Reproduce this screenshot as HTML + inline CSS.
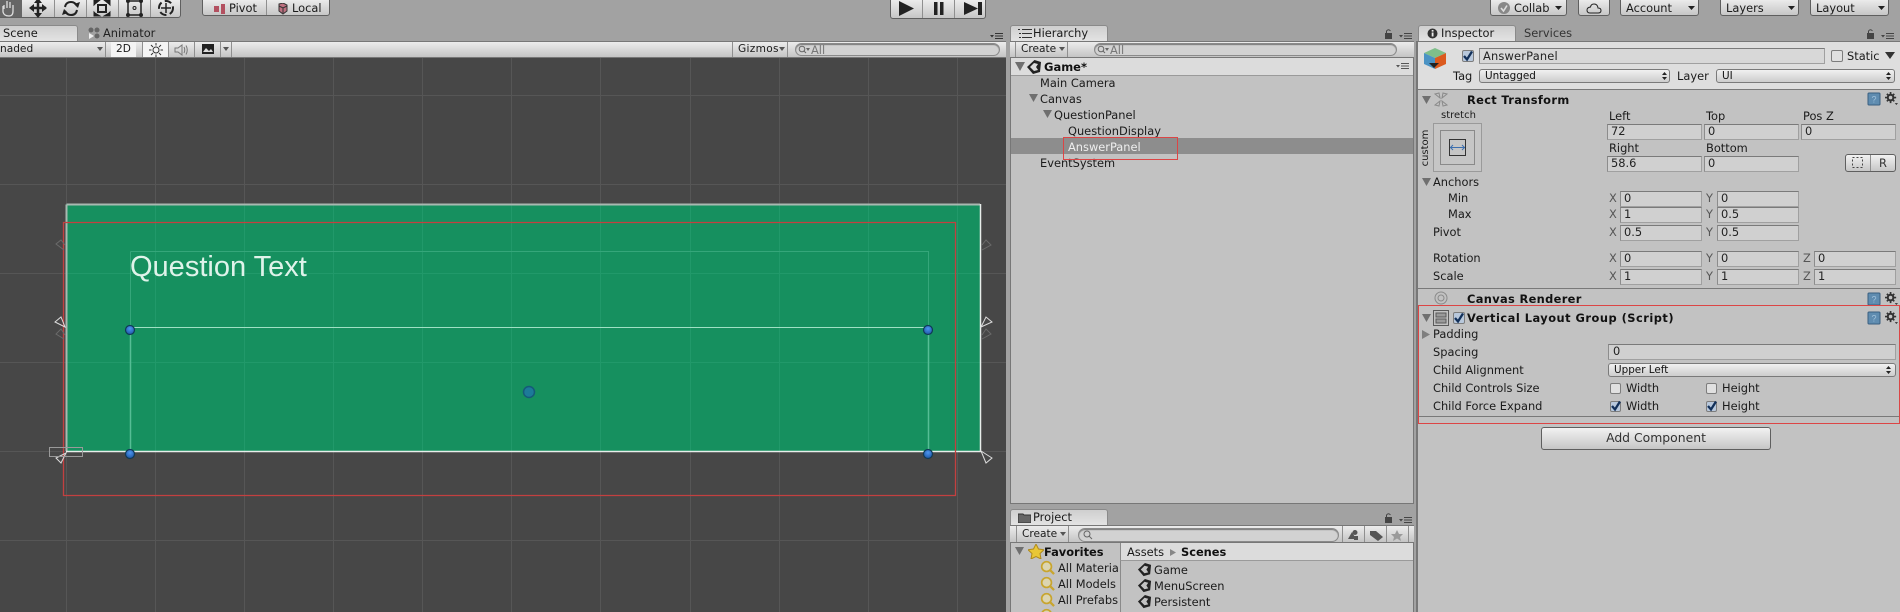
<!DOCTYPE html>
<html><head><meta charset="utf-8"><title>Unity Editor</title>
<style>
html,body{margin:0;padding:0;background:#a2a2a2}
#r{position:relative;width:1900px;height:612px;overflow:hidden;background:#a2a2a2;font:11.4px/16px "DejaVu Sans","Liberation Sans",sans-serif;color:#1a1a1a}
#r div,#r svg{position:absolute}
.t{white-space:nowrap;height:16px}
.b{font-weight:bold;color:#111}
.tab{background:linear-gradient(#cfcfcf,#e4e4e4);border:1px solid #8a8a8a;border-bottom:0;border-radius:3px 3px 0 0;box-sizing:border-box}
.tb{background:linear-gradient(#ececec,#c4c4c4);border-top:1px solid #777;border-bottom:1px solid #777;box-sizing:border-box}
.btn{background:linear-gradient(#f2f2f2,#c6c6c6);border:1px solid #5f5f5f;border-radius:3px;box-sizing:border-box}
.sep{background:#8f8f8f;width:1px}
.f{background:#d0d0d0;border:1px solid #a0a0a0;border-top-color:#7a7a7a;border-left-color:#8c8c8c;box-sizing:border-box;line-height:13px;padding-left:3px;font-size:11.4px;color:#222}
.dd{background:linear-gradient(#f0f0f0,#cdcdcd);border:1px solid #7a7a7a;border-radius:3px;box-sizing:border-box;font-size:10.4px;line-height:12px;padding-left:5px;color:#111}
.search{background:#d2d2d2;border:1px solid #8a8a8a;border-radius:8px;box-sizing:border-box;box-shadow:inset 0 1px 1px #777;color:#777;line-height:12px}
.red{border:1px solid #dc4545;box-sizing:border-box}
.cb{width:11px;height:11px;background:#e0e0e0;border:1px solid #7d7d7d;border-radius:2px;box-sizing:border-box}
.l{background:#797979;height:1px}
</style></head><body><div id="r">
<svg width="0" height="0" style="display:none"><defs>
<symbol id="u" viewBox="0 0 16 16"><path d="M8.500 1 15 3 14 13 7 15 1 8ZM4 8 8 4 12 5 10 8 12 11 8 12Z" fill="#222" fill-rule="evenodd"/></symbol>
<symbol id="q" viewBox="0 0 16 16"><circle cx="7" cy="7" r="5.200" fill="#f6e8a0" fill-opacity=".5" stroke="#c8a52e" stroke-width="1.800"/><path d="M11 11 15 15" stroke="#c8a52e" stroke-width="2.400"/></symbol>
<symbol id="h" viewBox="0 0 14 14"><rect x="1" y="1" width="12" height="12" rx="1" fill="#5f8cb0" stroke="#3a5f80"/><text x="7" y="10.500" font-size="9" text-anchor="middle" fill="#9fc0da" font-family="Liberation Sans">?</text></symbol>
<symbol id="g" viewBox="0 0 14 14"><circle cx="6" cy="6" r="3" fill="none" stroke="#333" stroke-width="2.200"/><path d="M6 0V3M6 9V12M0 6H3M9 6H12M2 2 4 4M10 2 8 4M2 10 4 8M10 10 8 8" stroke="#333" stroke-width="1.800"/><path d="M10.500 12H14L12.250 14Z" fill="#333"/></symbol>
<symbol id="c" viewBox="0 0 12 12"><path d="M2 6 5 9.500 10 1.500" fill="none" stroke="#12305a" stroke-width="2.300"/></symbol>
</defs></svg>

<!-- Scene panel -->
<div style="left:0;top:58px;width:1006px;height:554px;background:#474747"></div>
<svg style="left:0;top:58px" width="1006" height="554"><g stroke="#565656" stroke-width="1" shape-rendering="crispEdges"><path d="M66.500 0V554M155.500 0V554M244.500 0V554M333.500 0V554M422.500 0V554M511.500 0V554M600.500 0V554M690.500 0V554M779.500 0V554M868.500 0V554M957.500 0V554M0 37.500H1006M0 126.500H1006M0 215.500H1006M0 304.500H1006M0 393.500H1006M0 482.500H1006"/></g></svg>
<div style="left:66px;top:204px;width:914px;height:247px;background:#16905f"></div>
<svg style="left:0;top:58px" width="1006" height="554"><g stroke="#2ea377" stroke-opacity=".45" stroke-width="1" shape-rendering="crispEdges"><path d="M155.500 146V393M244.500 146V393M333.500 146V393M422.500 146V393M511.500 146V393M600.500 146V393M690.500 146V393M779.500 146V393M868.500 146V393M957.500 146V393M66 215.500H980M66 304.500H980"/></g></svg>
<svg style="left:0;top:190px" width="1006" height="330" fill="none">
<path d="M66.500 14.500V261M66.500 14.500H980" stroke="#a9b8b1" stroke-width="2"/>
<path d="M66 261.500H980.500V14" stroke="#e8eeeb" stroke-width="1.500"/>
<path d="M130.500 61.500H928.500V261M130.500 61.500V261" stroke="#35a67a" stroke-width="1"/>
<path d="M130.500 137.500H928.500" stroke="#9fe0c4" stroke-width="1"/>
<path d="M130.500 137V261M928.500 137V261" stroke="#56bd95" stroke-width="1.500"/>
<path d="M63.500 32.500H955.500V305.500H63.500Z" stroke="#c34040" stroke-width="1.300"/>
<path d="M64 60 56 54 61 50 65 55M64 149 56 144 61 139 65 145M982 60 991 55 986 50 982 55M982 149 991 144 986 139 982 145" stroke="#6a6a6a"/>
<path d="M65 137 55 132 61 127ZM66 263 56 268 61 273ZM981 137 992 132 986 127ZM981 261 992 268 986 273Z" stroke="#dcdcdc"/>
<rect x="49.500" y="257.500" width="33" height="9" stroke="#9a9a9a"/>
</svg>
<svg style="left:0;top:0" width="1006" height="612">
<defs><radialGradient id="bl" cx=".5" cy=".35" r=".7"><stop offset="0" stop-color="#4d96ef"/><stop offset="1" stop-color="#1a52a0"/></radialGradient></defs>
<g fill="url(#bl)" stroke="#103a57" stroke-width="1.200"><circle cx="130" cy="330" r="4.500"/><circle cx="928" cy="330" r="4.500"/><circle cx="130" cy="454" r="4.500"/><circle cx="928" cy="454" r="4.500"/></g>
<circle cx="529" cy="392" r="5.500" fill="#1d7a99" stroke="#155a78" stroke-width="1.500"/>
</svg>
<div class="t" style="left:130px;top:251px;height:32px;font:29px/32px 'Liberation Sans',sans-serif;color:#dff3ea">Question Text</div>

<!-- Top tools -->
<div class="btn" style="left:-6px;top:-4px;width:187px;height:22px"></div>
<div style="left:0;top:0;width:22px;height:17px;background:#666"></div>
<div class="sep" style="left:54px;top:0;height:17px"></div><div class="sep" style="left:86px;top:0;height:17px"></div><div class="sep" style="left:118px;top:0;height:17px"></div><div class="sep" style="left:150px;top:0;height:17px"></div>
<svg style="left:0;top:0" width="182" height="18" fill="none" stroke="#222" stroke-width="2">
<path d="M3 6V12Q4 16 9 16 13 16 13 11V5M4 5V9M7 1V8M10 2V8" stroke="#ddd" stroke-width="1.300"/>
<path d="M38 1V15M31 8H46" stroke-width="2.500"/><path d="M38 -2 34 3H42ZM38 18 34 13H42ZM29 8 34 4V12ZM47 8 42 4V12Z" fill="#222" stroke="none"/>
<path d="M65 7Q66 2 71 2 75 2 77 6M77 10Q76 15 71 15 67 15 65 11" stroke-width="2"/><path d="M78 8 74 4 80 2ZM64 9 68 13 62 15Z" fill="#222" stroke="none"/>
<rect x="98" y="5" width="8" height="7" stroke-width="2"/><path d="M95 4 100 0H94V5ZM109 4 104 0H110V5ZM95 13 100 16H94V12ZM109 13 104 16H110V12Z" fill="#222" stroke="#222" stroke-width="1"/>
<path d="M128 1H140M128 15H140M128 1V15M141 1V15" stroke-width="1.500"/><circle cx="134.500" cy="8" r="1.500" stroke-width="1"/><g fill="#222" stroke="none"><circle cx="128" cy="1" r="2"/><circle cx="141" cy="1" r="2"/><circle cx="128" cy="15" r="2"/><circle cx="141" cy="15" r="2"/></g>
<circle cx="166" cy="8" r="7" stroke-width="2" stroke-dasharray="7 3.500"/><path d="M166 3V13M161 8H171" stroke-width="1.500"/>
</svg>
<div class="btn" style="left:202px;top:-4px;width:128px;height:20px"></div><div class="sep" style="left:266px;top:0;height:15px"></div>
<svg style="left:213px;top:3px" width="110" height="12"><rect x="1" y="3" width="5" height="6" fill="#b35060"/><rect x="8" y="1" width="4" height="10" fill="#b35060"/><path d="M66 1 70 0 74 2V8L70 11 66 8Z" fill="#bd7080" stroke="#333"/><path d="M66 3 70 5 74 3M70 5V10" stroke="#333" fill="none"/></svg>
<div class="t" style="left:229px;top:0">Pivot</div><div class="t" style="left:292px;top:0">Local</div>
<div class="btn" style="left:890px;top:-4px;width:96px;height:23px"></div><div class="sep" style="left:922px;top:0;height:18px"></div><div class="sep" style="left:954px;top:0;height:18px"></div>
<svg style="left:890px;top:0" width="96" height="18" fill="#222"><path d="M9 1 24 8.500 9 16Z"/><rect x="44" y="2" width="3.500" height="13"/><rect x="50" y="2" width="3.500" height="13"/><path d="M74 2 88 8.500 74 15ZM88 2H92V15H88Z"/></svg>
<div class="btn" style="left:1490px;top:-4px;width:77px;height:20px"></div>
<svg style="left:1498px;top:2px" width="12" height="12"><circle cx="6" cy="6" r="6" fill="#888"/><path d="M3 6 5.500 9 9 3.500" fill="none" stroke="#ddd" stroke-width="1.600"/></svg>
<div class="t" style="left:1514px;top:0">Collab</div><svg style="left:1555px;top:6px" width="7" height="5"><path d="M0 0H7L3.500 4Z" fill="#222"/></svg>
<div class="btn" style="left:1578px;top:-4px;width:32px;height:20px"></div>
<svg style="left:1586px;top:2px" width="16" height="12"><path d="M4 11H12Q15 11 15 8.500 15 6 12 6 11.500 2 8 2 5 2 4.500 5 1 5.500 1 8 1 11 4 11Z" fill="none" stroke="#222"/></svg>
<div class="btn" style="left:1620px;top:-4px;width:79px;height:20px"></div><div class="t" style="left:1626px;top:0">Account</div><svg style="left:1688px;top:6px" width="7" height="5"><path d="M0 0H7L3.500 4Z" fill="#222"/></svg>
<div class="btn" style="left:1720px;top:-4px;width:79px;height:20px"></div><div class="t" style="left:1726px;top:0">Layers</div><svg style="left:1788px;top:6px" width="7" height="5"><path d="M0 0H7L3.500 4Z" fill="#222"/></svg>
<div class="btn" style="left:1810px;top:-4px;width:79px;height:20px"></div><div class="t" style="left:1816px;top:0">Layout</div><svg style="left:1878px;top:6px" width="7" height="5"><path d="M0 0H7L3.500 4Z" fill="#222"/></svg>

<!-- Scene tabs/toolbar -->
<div class="tab" style="left:-3px;top:25px;width:81px;height:17px"></div>
<div class="t" style="left:3px;top:25px">Scene</div>
<svg style="left:88px;top:27px" width="12" height="13" fill="#666"><circle cx="3" cy="3" r="2.500"/><circle cx="9" cy="3" r="2.500"/><circle cx="9" cy="9" r="2.500"/><path d="M1 6 6 9 1 12Z" fill="#eee"/></svg>
<div class="t" style="left:103px;top:25px;color:#222">Animator</div>
<div class="tb" style="left:0;top:41px;width:1006px;height:17px"></div>
<div class="t" style="left:0;top:41px;font-size:10.6px">naded</div>
<svg style="left:97px;top:47px" width="6" height="4"><path d="M0 0H6L3 4Z" fill="#555"/></svg>
<div class="sep" style="left:105px;top:42px;height:15px"></div>
<div style="left:111px;top:42px;width:25px;height:15px;background:#f4f4f4"></div><div class="t" style="left:116px;top:41px;font-size:10.6px">2D</div>
<div class="sep" style="left:142px;top:42px;height:15px"></div>
<div style="left:143px;top:42px;width:25px;height:15px;background:#f4f4f4"></div>
<svg style="left:149px;top:43px" width="14" height="14" fill="none" stroke="#333"><circle cx="7" cy="7" r="3"/><path d="M7 0V2.500M7 11.500V14M0 7H2.500M11.500 7H14M2 2 4 4M10 10 12 12M12 2 10 4M4 10 2 12"/></svg>
<div class="sep" style="left:168px;top:42px;height:15px"></div><div class="sep" style="left:194px;top:42px;height:15px"></div><div class="sep" style="left:220px;top:42px;height:15px"></div><div class="sep" style="left:231px;top:42px;height:15px"></div>
<svg style="left:174px;top:44px" width="15" height="12" fill="none" stroke="#777"><path d="M1 4H4L8 1V11L4 8H1Z"/><path d="M10 3Q11.500 6 10 9M12 1.500Q14.500 6 12 10.500"/></svg>
<svg style="left:202px;top:44px" width="12" height="11"><rect width="12" height="10" fill="#222"/><path d="M1 8 4 4 7 7 9 5 11 8Z" fill="#ddd"/></svg>
<svg style="left:223px;top:47px" width="6" height="4"><path d="M0 0H6L3 4Z" fill="#555"/></svg>
<div class="sep" style="left:732px;top:42px;height:15px"></div><div class="t" style="left:738px;top:41px;font-size:10.6px;letter-spacing:.3px">Gizmos</div>
<svg style="left:779px;top:47px" width="6" height="4"><path d="M0 0H6L3 4Z" fill="#555"/></svg>
<div class="sep" style="left:787px;top:42px;height:15px"></div>
<div class="search" style="left:795px;top:43px;width:205px;height:13px;padding-left:15px">All</div>
<svg style="left:798px;top:45px" width="12" height="9" fill="none" stroke="#666"><circle cx="4" cy="4" r="2.800"/><path d="M6 6 8 8"/><path d="M8 3H12L10 6Z" fill="#666" stroke="none"/></svg>
<svg style="left:990px;top:33px" width="14" height="6" fill="#333"><path d="M0 2H4L2 4.500Z"/><rect x="5" y="0" width="8" height="1"/><rect x="5" y="2.500" width="8" height="1"/><rect x="5" y="5" width="8" height="1"/></svg>

<!-- Hierarchy -->
<div style="left:1010px;top:41px;width:404px;height:463px;background:#c2c2c2;border:1px solid #777;border-top:0;box-sizing:border-box"></div>
<div class="tab" style="left:1010px;top:25px;width:98px;height:17px"></div>
<svg style="left:1018px;top:29px" width="14" height="9" fill="#333"><path d="M0 0H2V1H0ZM4 0H14V1H4ZM1 4H3V5H1ZM4 4H14V5H4ZM1 8H3V9H1ZM4 8H14V9H4Z"/></svg>
<div class="t" style="left:1033px;top:25px">Hierarchy</div>
<svg style="left:1384px;top:29px" width="29" height="11" fill="#444"><rect x="1" y="4" width="7" height="6"/><path d="M2.500 4V2Q4.500 -0.500 6.500 2" fill="none" stroke="#444"/><path d="M15 6H19L17 8.500Z"/><path d="M20 4H28V5H20ZM20 6.500H28V7.500H20ZM20 9H28V10H20Z"/></svg>
<div class="tb" style="left:1010px;top:41px;width:404px;height:17px"></div>
<div class="sep" style="left:1015px;top:42px;height:15px"></div><div class="sep" style="left:1067px;top:42px;height:15px"></div>
<div class="t" style="left:1021px;top:41px;font-size:10.6px">Create</div>
<svg style="left:1059px;top:47px" width="6" height="4"><path d="M0 0H6L3 4Z" fill="#555"/></svg>
<div class="search" style="left:1094px;top:43px;width:303px;height:13px;padding-left:15px">All</div>
<svg style="left:1097px;top:45px" width="12" height="9" fill="none" stroke="#666"><circle cx="4" cy="4" r="2.800"/><path d="M6 6 8 8"/><path d="M8 3H12L10 6Z" fill="#666" stroke="none"/></svg>
<div style="left:1011px;top:58px;width:402px;height:17px;background:#dcdcdc;border-bottom:1px solid #9a9a9a;box-sizing:content-box"></div>
<svg style="left:1015px;top:62px" width="11" height="10"><path d="M0 0H10L5 9Z" fill="#6f6f6f"/></svg>
<svg style="left:1026px;top:59px;width:16px;height:16px"><use href="#u"/></svg>
<div class="t b" style="left:1044px;top:59px;font-size:11.5px">Game*</div>
<svg style="left:1396px;top:63px" width="14" height="6" fill="#555"><path d="M0 2H4L2 4.500Z"/><rect x="5" y="0" width="8" height="1"/><rect x="5" y="2.500" width="8" height="1"/><rect x="5" y="5" width="8" height="1"/></svg>
<div class="t" style="left:1040px;top:75px">Main Camera</div>
<svg style="left:1029px;top:94px" width="10" height="8"><path d="M0 0H9L4.500 8Z" fill="#6f6f6f"/></svg>
<div class="t" style="left:1040px;top:91px">Canvas</div>
<svg style="left:1043px;top:110px" width="10" height="8"><path d="M0 0H9L4.500 8Z" fill="#6f6f6f"/></svg>
<div class="t" style="left:1054px;top:107px">QuestionPanel</div>
<div class="t" style="left:1068px;top:123px">QuestionDisplay</div>
<div style="left:1011px;top:138px;width:402px;height:16px;background:#8d8d8d"></div>
<div class="t" style="left:1068px;top:139px;color:#eee">AnswerPanel</div>
<div class="t" style="left:1040px;top:155px">EventSystem</div>
<div class="red" style="left:1063px;top:137px;width:115px;height:23px"></div>

<!-- Project -->
<div style="left:1010px;top:525px;width:404px;height:87px;background:#c2c2c2;border-left:1px solid #777;border-right:1px solid #777;box-sizing:border-box"></div>
<div class="tab" style="left:1010px;top:509px;width:98px;height:17px"></div>
<svg style="left:1018px;top:513px" width="13" height="10"><path d="M0 1H5L6 2H13V10H0Z" fill="#666" stroke="#333"/></svg>
<div class="t" style="left:1033px;top:509px">Project</div>
<svg style="left:1384px;top:513px" width="29" height="11" fill="#444"><rect x="1" y="4" width="7" height="6"/><path d="M2.500 4V2Q4.500 -0.500 6.500 2" fill="none" stroke="#444"/><path d="M15 6H19L17 8.500Z"/><path d="M20 4H28V5H20ZM20 6.500H28V7.500H20ZM20 9H28V10H20Z"/></svg>
<div class="tb" style="left:1010px;top:525px;width:404px;height:18px"></div>
<div class="sep" style="left:1016px;top:526px;height:16px"></div><div class="sep" style="left:1068px;top:526px;height:16px"></div>
<div class="t" style="left:1022px;top:526px;font-size:10.6px">Create</div>
<svg style="left:1060px;top:532px" width="6" height="4"><path d="M0 0H6L3 4Z" fill="#555"/></svg>
<div class="search" style="left:1078px;top:528px;width:261px;height:14px"></div>
<svg style="left:1083px;top:530px" width="10" height="10" fill="none" stroke="#666"><circle cx="4" cy="4" r="3"/><path d="M6 6 9 9"/></svg>
<div class="sep" style="left:1342px;top:526px;height:16px"></div><div class="sep" style="left:1364px;top:526px;height:16px"></div><div class="sep" style="left:1386px;top:526px;height:16px"></div><div class="sep" style="left:1408px;top:526px;height:16px"></div>
<svg style="left:1347px;top:529px" width="60" height="12"><path d="M1 10 5 3 9 10Z" fill="#555"/><circle cx="8" cy="3.500" r="2.500" fill="#555"/><rect x="7" y="7" width="4" height="4" fill="#555"/><path d="M23 2H29L36 8 31 12 23 6Z" fill="#555"/><path d="M50 1 52 5H56L53 8 54 12 50 9.500 46 12 47 8 44 5H48Z" fill="#9a9a9a"/></svg>
<div style="left:1120px;top:543px;width:293px;height:18px;background:#dcdcdc;border-bottom:1px solid #9a9a9a;border-left:1px solid #8a8a8a;box-sizing:border-box"></div>
<div style="left:1120px;top:561px;width:1px;height:51px;background:#8a8a8a"></div>
<svg style="left:1015px;top:547px" width="10" height="9"><path d="M0 0H9L4.500 8Z" fill="#6f6f6f"/></svg>
<svg style="left:1028px;top:544px" width="16" height="15"><path d="M8 0 10.500 5 16 5.800 12 9.500 13 15 8 12.500 3 15 4 9.500 0 5.800 5.500 5Z" fill="#e9c737" stroke="#b08a1c"/></svg>
<div class="t b" style="left:1044px;top:544px">Favorites</div>
<div class="t" style="left:1127px;top:544px">Assets</div>
<svg style="left:1170px;top:549px" width="6" height="7"><path d="M0 0 6 3.500 0 7Z" fill="#888"/></svg>
<div class="t b" style="left:1181px;top:544px">Scenes</div>
<svg style="left:1040px;top:560px;width:15px;height:15px"><use href="#q"/></svg><div class="t" style="left:1058px;top:560px">All Materia</div>
<svg style="left:1040px;top:576px;width:15px;height:15px"><use href="#q"/></svg><div class="t" style="left:1058px;top:576px">All Models</div>
<svg style="left:1040px;top:592px;width:15px;height:15px"><use href="#q"/></svg><div class="t" style="left:1058px;top:592px;width:60px;overflow:hidden">All Prefabs</div>
<svg style="left:1040px;top:608px;width:15px;height:15px"><use href="#q"/></svg>
<svg style="left:1137px;top:562px;width:15px;height:15px"><use href="#u"/></svg><div class="t" style="left:1154px;top:562px">Game</div>
<svg style="left:1137px;top:578px;width:15px;height:15px"><use href="#u"/></svg><div class="t" style="left:1154px;top:578px">MenuScreen</div>
<svg style="left:1137px;top:594px;width:15px;height:15px"><use href="#u"/></svg><div class="t" style="left:1154px;top:594px">Persistent</div>

<!-- Inspector -->
<div style="left:1416px;top:41px;width:484px;height:571px;background:#c2c2c2;border-left:2px solid #777;box-sizing:border-box"></div>
<div class="tab" style="left:1418px;top:25px;width:98px;height:17px"></div>
<svg style="left:1427px;top:28px" width="11" height="11"><circle cx="5.500" cy="5.500" r="5" fill="#333"/><rect x="4.700" y="4.500" width="1.800" height="4" fill="#eee"/><rect x="4.700" y="2" width="1.800" height="1.600" fill="#eee"/></svg>
<div class="t" style="left:1441px;top:25px">Inspector</div>
<div class="t" style="left:1524px;top:25px;color:#333">Services</div>
<svg style="left:1866px;top:29px" width="29" height="11" fill="#444"><rect x="1" y="4" width="7" height="6"/><path d="M2.500 4V2Q4.500 -0.500 6.500 2" fill="none" stroke="#444"/><path d="M15 6H19L17 8.500Z"/><path d="M20 4H28V5H20ZM20 6.500H28V7.500H20ZM20 9H28V10H20Z"/></svg>
<div style="left:1418px;top:41px;width:482px;height:49px;background:#dedede;border-top:1px solid #777;border-bottom:1px solid #777;box-sizing:border-box"></div>
<svg style="left:1423px;top:48px" width="24" height="23"><path d="M1 5 12 0 23 5 12 10Z" fill="#7fbf8a"/><path d="M1 5 12 10V21L1 16Z" fill="#4b93c4"/><path d="M23 5 12 10V21L23 16Z" fill="#db5a1e"/><path d="M6 15H16L11 20Z" fill="#222"/></svg>
<div class="cb" style="left:1462px;top:50px;width:12px;height:12px;background:#b8c8dc"></div>
<svg style="left:1462px;top:50px" width="12" height="12"><use href="#c"/></svg>
<div class="f" style="left:1479px;top:48px;width:346px;height:16px;line-height:14px;background:#d8d8d8;letter-spacing:.2px">AnswerPanel</div>
<div class="cb" style="left:1831px;top:50px;width:12px;height:12px"></div>
<div class="t" style="left:1847px;top:48px">Static</div>
<svg style="left:1885px;top:52px" width="10" height="7"><path d="M0 0H10L5 7Z" fill="#333"/></svg>
<div class="t" style="left:1453px;top:68px">Tag</div>
<div class="dd" style="left:1479px;top:69px;width:191px;height:14px">Untagged</div>
<svg style="left:1662px;top:71px" width="5" height="10" fill="#222"><path d="M0 4 2.500 1 5 4ZM0 6 2.500 9 5 6Z"/></svg>
<div class="t" style="left:1677px;top:68px">Layer</div>
<div class="dd" style="left:1716px;top:69px;width:179px;height:14px">UI</div>
<svg style="left:1886px;top:71px" width="5" height="10" fill="#222"><path d="M0 4 2.500 1 5 4ZM0 6 2.500 9 5 6Z"/></svg>
<svg style="left:1422px;top:96px" width="9" height="8"><path d="M0 0H9L4.500 8Z" fill="#6f6f6f"/></svg>
<svg style="left:1432px;top:91px" width="18" height="17" fill="none" stroke="#8a8a8a"><path d="M3 3 7 2 8 7ZM15 3 11 2 10 7ZM3 14 7 15 8 10ZM15 14 11 15 10 10Z"/></svg>
<div class="t b" style="left:1467px;top:92px;letter-spacing:.35px">Rect Transform</div>
<svg style="left:1867px;top:92px;width:14px;height:14px"><use href="#h"/></svg>
<svg style="left:1885px;top:92px;width:13px;height:13px"><use href="#g"/></svg>
<div class="t" style="left:1441px;top:108px;font-size:10px">stretch</div>
<div class="t" style="left:1406px;top:140px;width:40px;text-align:center;font-size:10px;transform:rotate(-90deg)">custom</div>
<div style="left:1433px;top:123px;width:49px;height:49px;background:#c6c6c6;border:1px solid #9a9a9a;box-sizing:border-box"></div>
<div style="left:1440px;top:130px;width:35px;height:35px;border:1px solid #8a8a8a;box-sizing:border-box"></div>
<div style="left:1449px;top:139px;width:17px;height:17px;border:1px solid #333;box-sizing:border-box"></div>
<svg style="left:1450px;top:144px" width="15" height="7" fill="none" stroke="#3d6fae"><path d="M0 3.500H15M3 1 0.500 3.500 3 6M12 1 14.500 3.500 12 6"/></svg>
<div class="t" style="left:1609px;top:108px">Left</div><div class="t" style="left:1706px;top:108px">Top</div><div class="t" style="left:1803px;top:108px">Pos Z</div>
<div class="f" style="left:1607px;top:124px;width:95px;height:16px">72</div><div class="f" style="left:1704px;top:124px;width:95px;height:16px">0</div><div class="f" style="left:1801px;top:124px;width:95px;height:16px">0</div>
<div class="t" style="left:1609px;top:140px">Right</div><div class="t" style="left:1706px;top:140px">Bottom</div>
<div class="f" style="left:1607px;top:156px;width:95px;height:16px">58.6</div><div class="f" style="left:1704px;top:156px;width:95px;height:16px">0</div>
<div class="btn" style="left:1845px;top:154px;width:51px;height:18px"></div><div class="sep" style="left:1870px;top:155px;height:16px"></div>
<svg style="left:1852px;top:157px" width="11" height="11"><rect x=".5" y=".5" width="10" height="10" fill="none" stroke="#444" stroke-dasharray="2 2"/></svg>
<div class="t" style="left:1879px;top:155px;color:#333">R</div>
<svg style="left:1422px;top:178px" width="9" height="8"><path d="M0 0H9L4.500 8Z" fill="#6f6f6f"/></svg>
<div class="t" style="left:1433px;top:174px">Anchors</div>
<div class="t" style="left:1448px;top:190px">Min</div><div class="t" style="left:1448px;top:206px">Max</div><div class="t" style="left:1433px;top:224px">Pivot</div><div class="t" style="left:1433px;top:250px">Rotation</div><div class="t" style="left:1433px;top:268px">Scale</div>
<div class="t" style="left:1609px;top:190px;color:#555">X</div><div class="f" style="left:1620px;top:191px;width:82px;height:16px">0</div><div class="t" style="left:1706px;top:190px;color:#555">Y</div><div class="f" style="left:1717px;top:191px;width:82px;height:16px">0</div>
<div class="t" style="left:1609px;top:206px;color:#555">X</div><div class="f" style="left:1620px;top:207px;width:82px;height:16px">1</div><div class="t" style="left:1706px;top:206px;color:#555">Y</div><div class="f" style="left:1717px;top:207px;width:82px;height:16px">0.5</div>
<div class="t" style="left:1609px;top:224px;color:#555">X</div><div class="f" style="left:1620px;top:225px;width:82px;height:16px">0.5</div><div class="t" style="left:1706px;top:224px;color:#555">Y</div><div class="f" style="left:1717px;top:225px;width:82px;height:16px">0.5</div>
<div class="t" style="left:1609px;top:250px;color:#555">X</div><div class="f" style="left:1620px;top:251px;width:82px;height:16px">0</div><div class="t" style="left:1706px;top:250px;color:#555">Y</div><div class="f" style="left:1717px;top:251px;width:82px;height:16px">0</div><div class="t" style="left:1803px;top:250px;color:#555">Z</div><div class="f" style="left:1814px;top:251px;width:82px;height:16px">0</div>
<div class="t" style="left:1609px;top:268px;color:#555">X</div><div class="f" style="left:1620px;top:269px;width:82px;height:16px">1</div><div class="t" style="left:1706px;top:268px;color:#555">Y</div><div class="f" style="left:1717px;top:269px;width:82px;height:16px">1</div><div class="t" style="left:1803px;top:268px;color:#555">Z</div><div class="f" style="left:1814px;top:269px;width:82px;height:16px">1</div>
<div class="l" style="left:1418px;top:288px;width:482px"></div>
<svg style="left:1434px;top:291px" width="14" height="14" fill="none" stroke="#8a8a8a"><circle cx="7" cy="7" r="6"/><circle cx="7" cy="7" r="3"/></svg>
<div class="t b" style="left:1467px;top:291px;letter-spacing:.35px">Canvas Renderer</div>
<svg style="left:1867px;top:292px;width:14px;height:14px"><use href="#h"/></svg>
<svg style="left:1885px;top:292px;width:13px;height:13px"><use href="#g"/></svg>
<div class="red" style="left:1418px;top:305px;width:482px;height:119px"></div>
<svg style="left:1422px;top:314px" width="9" height="8"><path d="M0 0H9L4.500 8Z" fill="#6f6f6f"/></svg>
<svg style="left:1433px;top:310px" width="16" height="16" fill="none" stroke="#5a5a5a"><rect x=".5" y=".5" width="15" height="15"/><rect x="3" y="3" width="10" height="4" fill="#9a9a9a"/><rect x="3" y="9" width="10" height="4" fill="#9a9a9a"/></svg>
<div class="cb" style="left:1453px;top:312px;width:12px;height:12px;background:#b8c8dc"></div><svg style="left:1453px;top:312px" width="12" height="12"><use href="#c"/></svg>
<div class="t b" style="left:1467px;top:310px;letter-spacing:.5px">Vertical Layout Group (Script)</div>
<svg style="left:1867px;top:311px;width:14px;height:14px"><use href="#h"/></svg>
<svg style="left:1885px;top:311px;width:13px;height:13px"><use href="#g"/></svg>
<svg style="left:1422px;top:330px" width="8" height="9"><path d="M0 0 8 4.500 0 9Z" fill="#7f7f7f"/></svg>
<div class="t" style="left:1433px;top:326px">Padding</div>
<div class="t" style="left:1433px;top:344px">Spacing</div>
<div class="f" style="left:1608px;top:344px;width:288px;height:16px;padding-left:4px">0</div>
<div class="t" style="left:1433px;top:362px">Child Alignment</div>
<div class="dd" style="left:1608px;top:363px;width:288px;height:14px">Upper Left</div>
<svg style="left:1886px;top:365px" width="5" height="10" fill="#222"><path d="M0 4 2.500 1 5 4ZM0 6 2.500 9 5 6Z"/></svg>
<div class="t" style="left:1433px;top:380px">Child Controls Size</div>
<div class="cb" style="left:1610px;top:383px"></div><div class="t" style="left:1626px;top:380px">Width</div>
<div class="cb" style="left:1706px;top:383px"></div><div class="t" style="left:1722px;top:380px">Height</div>
<div class="t" style="left:1433px;top:398px">Child Force Expand</div>
<div class="cb" style="left:1610px;top:401px;background:#b8c8dc"></div><svg style="left:1610px;top:400px" width="12" height="12"><use href="#c"/></svg><div class="t" style="left:1626px;top:398px">Width</div>
<div class="cb" style="left:1706px;top:401px;background:#b8c8dc"></div><svg style="left:1706px;top:400px" width="12" height="12"><use href="#c"/></svg><div class="t" style="left:1722px;top:398px">Height</div>
<div class="l" style="left:1419px;top:416px;width:480px"></div>
<div class="btn" style="left:1541px;top:427px;width:230px;height:23px;text-align:center;line-height:20px;font-size:12.4px;color:#333">Add Component</div>
</div></body></html>
